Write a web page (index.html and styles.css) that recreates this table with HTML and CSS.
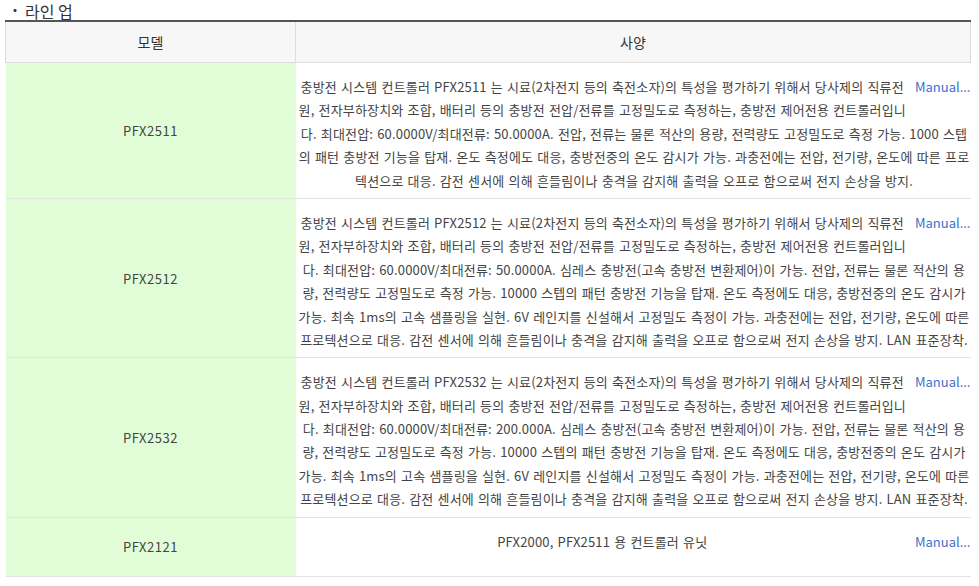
FILE: index.html
```html
<!DOCTYPE html>
<html>
    <head>
        <title>라인 업</title>
        <meta charset="UTF-8">
        <meta name="viewport" content="width=device-width, initial-scale=1.0">
        <link rel="stylesheet" href="styles.css">
    </head>
    <body>
        <div class="wrap">
            <h3 class="title"><span class="dot">・</span>라인 업</h3>
            <table class="lineup">
                <thead>
                    <tr>
                        <th class="col-model">모델</th>
                        <th>사양</th>
                    </tr>
                </thead>
                <tbody>
                    <tr class="r5">
                        <td class="model">PFX2511</td>
                        <td class="spec">
                            <a href="#" class="manual">Manual...</a>
                            충방전 시스템 컨트롤러 PFX2511 는 시료(2차전지 등의 축전소자)의 특성을 평가하기 위해서 당사제의 직류전원, 전자부하장치와 조합, 배터리 등의 충방전 전압/전류를 고정밀도로 측정하는, 충방전 제어전용 컨트롤러입니다. 최대전압: 60.0000V/최대전류: 50.0000A. 전압, 전류는 물론 적산의 용량, 전력량도 고정밀도로 측정 가능. 1000 스텝의 패턴 충방전 기능을 탑재. 온도 측정에도 대응, 충방전중의 온도 감시가 가능. 과충전에는 전압, 전기량, 온도에 따른 프로텍션으로 대응. 감전 센서에 의해 흔들림이나 충격을 감지해 출력을 오프로 함으로써 전지 손상을 방지.
                        </td>
                    </tr>
                    <tr>
                        <td class="model">PFX2512</td>
                        <td class="spec">
                            <a href="#" class="manual">Manual...</a>
                            충방전 시스템 컨트롤러 PFX2512 는 시료(2차전지 등의 축전소자)의 특성을 평가하기 위해서 당사제의 직류전원, 전자부하장치와 조합, 배터리 등의 충방전 전압/전류를 고정밀도로 측정하는, 충방전 제어전용 컨트롤러입니다. 최대전압: 60.0000V/최대전류: 50.0000A. 심레스 충방전(고속 충방전 변환제어)이 가능. 전압, 전류는 물론 적산의 용량, 전력량도 고정밀도로 측정 가능. 10000 스텝의 패턴 충방전 기능을 탑재. 온도 측정에도 대응, 충방전중의 온도 감시가 가능. 최속 1ms의 고속 샘플링을 실현. 6V 레인지를 신설해서 고정밀도 측정이 가능. 과충전에는 전압, 전기량, 온도에 따른 프로텍션으로 대응. 감전 센서에 의해 흔들림이나 충격을 감지해 출력을 오프로 함으로써 전지 손상을 방지. LAN 표준장착.
                        </td>
                    </tr>
                    <tr>
                        <td class="model">PFX2532</td>
                        <td class="spec">
                            <a href="#" class="manual">Manual...</a>
                            충방전 시스템 컨트롤러 PFX2532 는 시료(2차전지 등의 축전소자)의 특성을 평가하기 위해서 당사제의 직류전원, 전자부하장치와 조합, 배터리 등의 충방전 전압/전류를 고정밀도로 측정하는, 충방전 제어전용 컨트롤러입니다. 최대전압: 60.0000V/최대전류: 200.000A. 심레스 충방전(고속 충방전 변환제어)이 가능. 전압, 전류는 물론 적산의 용량, 전력량도 고정밀도로 측정 가능. 10000 스텝의 패턴 충방전 기능을 탑재. 온도 측정에도 대응, 충방전중의 온도 감시가 가능. 최속 1ms의 고속 샘플링을 실현. 6V 레인지를 신설해서 고정밀도 측정이 가능. 과충전에는 전압, 전기량, 온도에 따른 프로텍션으로 대응. 감전 센서에 의해 흔들림이나 충격을 감지해 출력을 오프로 함으로써 전지 손상을 방지. LAN 표준장착.
                        </td>
                    </tr>
                    <tr>
                        <td class="model">PFX2121</td>
                        <td class="spec">
                            <a href="#" class="manual">Manual...</a>
                            PFX2000, PFX2511 용 컨트롤러 유닛
                        </td>
                    </tr>
                </tbody>
            </table>
        </div>
    </body>
</html>
```

FILE: styles.css
```css
body {
    margin: 0;
    padding: 0;
    background-color: #fff;
    color: #333;
    font-family: "Noto Sans CJK KR", "Noto Sans", sans-serif;
}
.wrap {
    padding-left: 5px;
    width: 966px;
}
.title {
    margin: 0;
    padding-left: 4px;
    height: 20px;
    overflow: visible;
    font-size: 16px;
    font-weight: normal;
    line-height: 22px;
    color: #333;
}
.title .dot {
    display: inline-block;
    width: 16px;
    font-size: 12px;
    font-weight: bold;
    vertical-align: top;
}
.lineup {
    width: 966px;
    border-collapse: collapse;
    border-top: 2px solid #555;
    table-layout: fixed;
}
.lineup th {
    height: 40px;
    padding: 0;
    background-color: #f7f7f7;
    border: 1px solid #ddd;
    font-size: 14px;
    font-weight: normal;
    color: #333;
}
.lineup .col-model {
    width: 289px;
}
.lineup td {
    border-bottom: 1px solid #e3e3e3;
    font-size: 13px;
    color: #444;
}
.model {
    background-color: #e1fdd8;
    text-align: center;
    vertical-align: middle;
    padding: 0;
    letter-spacing: 0.5px;
}
.spec {
    padding: 12px 0 6px 2px;
    text-align: center;
    line-height: 1.8;
    vertical-align: top;
    letter-spacing: 0.17px;
    word-spacing: 1px;
}
.manual {
    float: right;
    height: 40px;
    padding-left: 8px;
    color: #3b6fd0;
    text-decoration: none;
    letter-spacing: 0;
    word-spacing: 0;
}
```
